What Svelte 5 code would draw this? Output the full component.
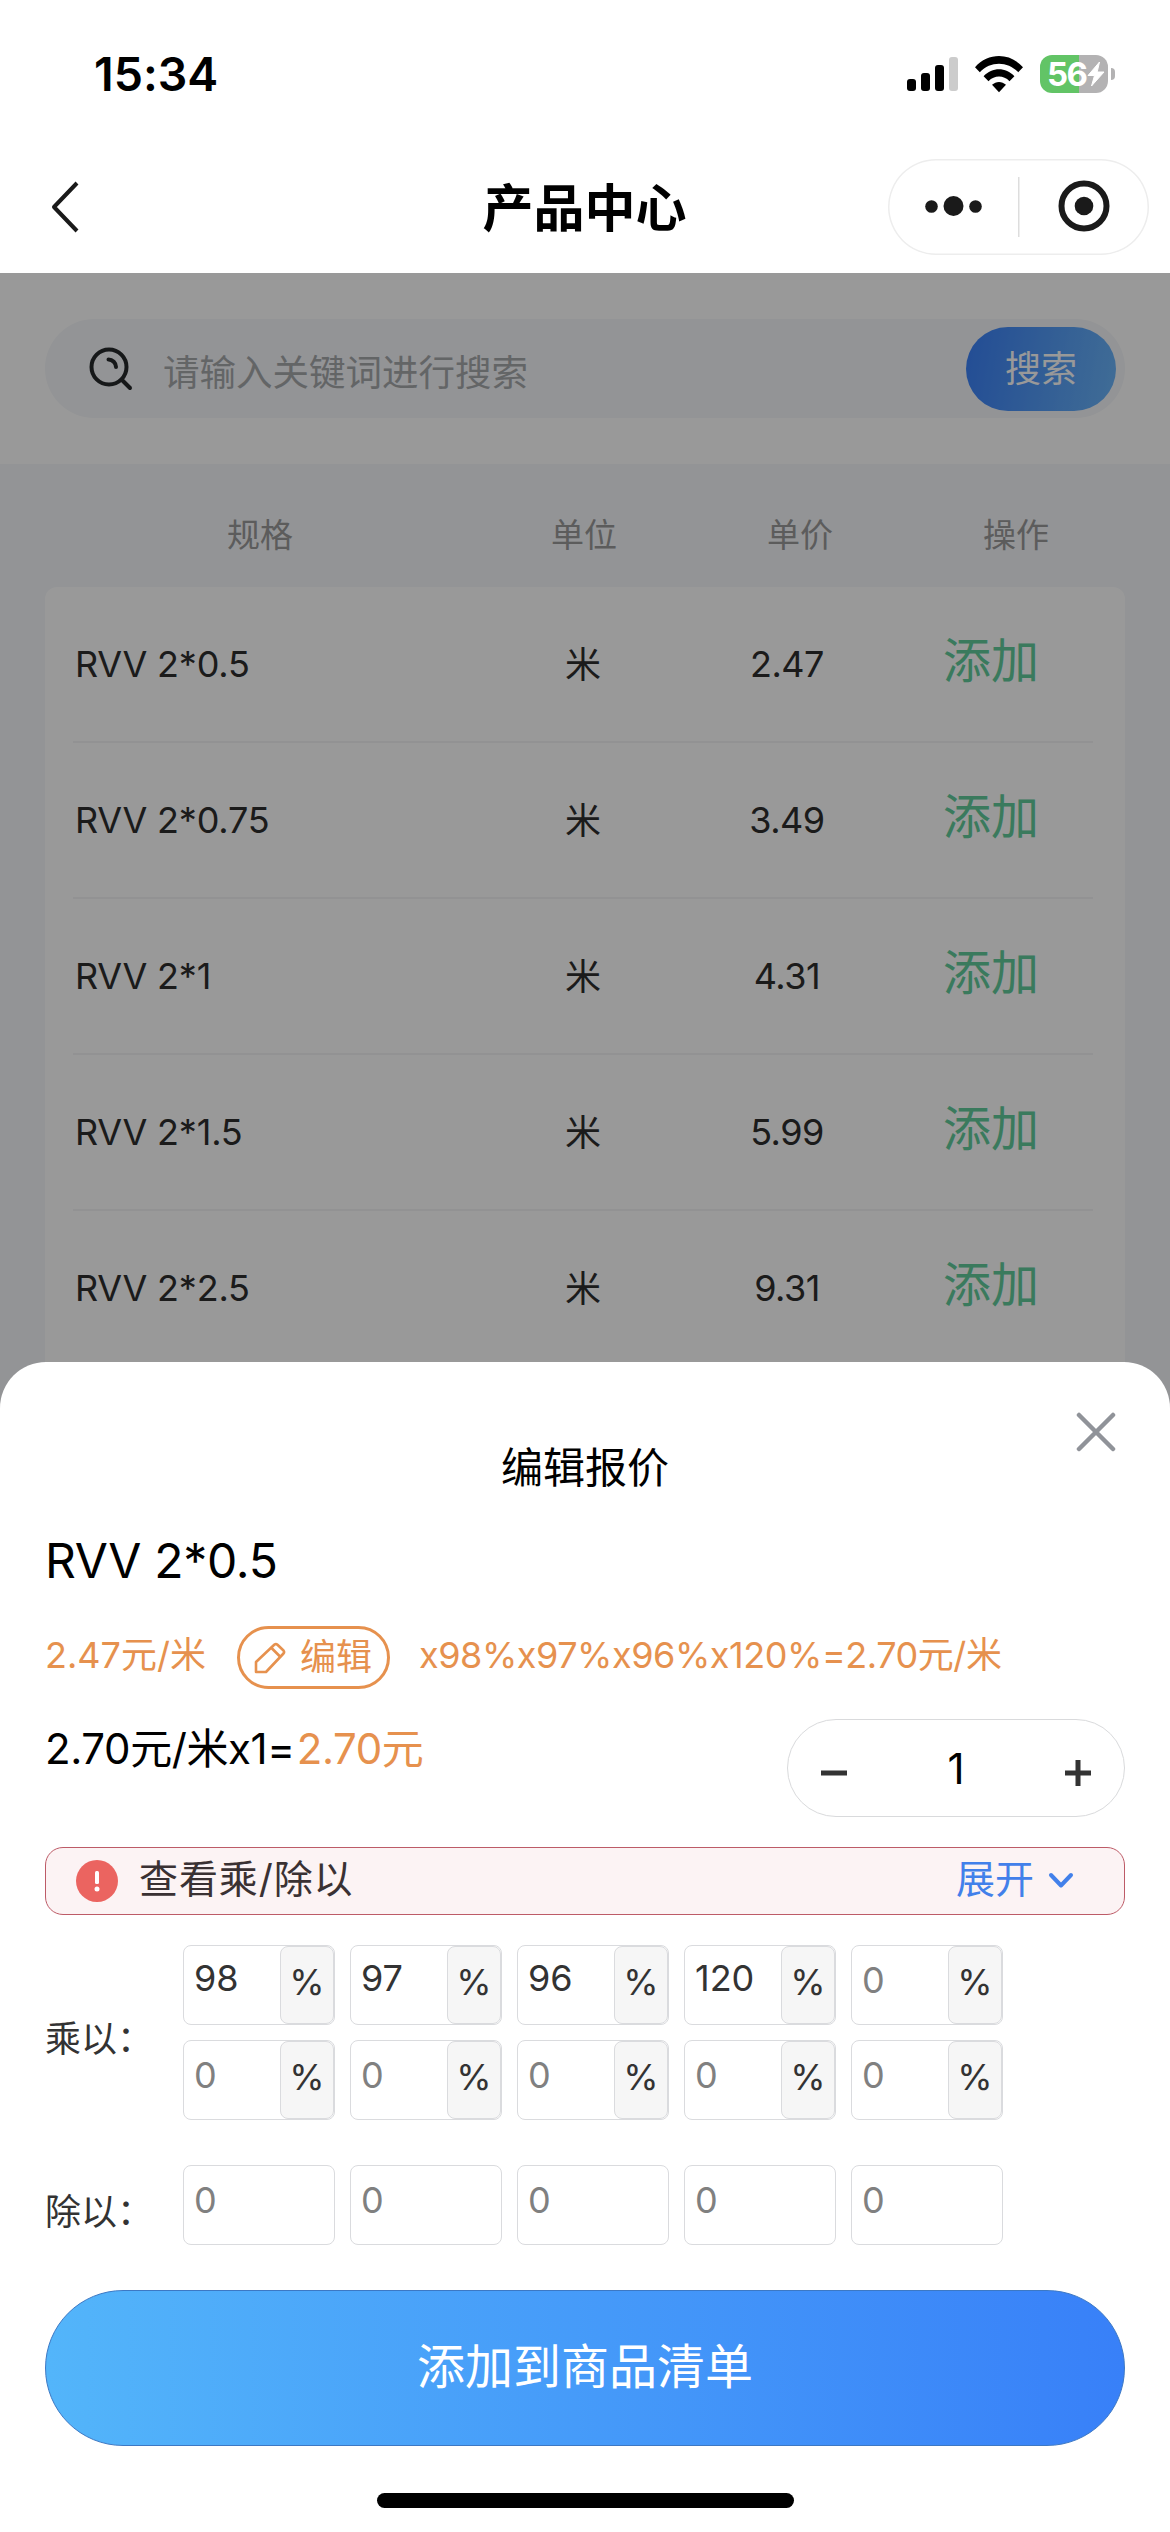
<script lang="ts">
    type Product = { spec: string; unit: string; price: string };

    const products: Product[] = [
        { spec: "RVV 2*0.5", unit: "米", price: "2.47" },
        { spec: "RVV 2*0.75", unit: "米", price: "3.49" },
        { spec: "RVV 2*1", unit: "米", price: "4.31" },
        { spec: "RVV 2*1.5", unit: "米", price: "5.99" },
        { spec: "RVV 2*2.5", unit: "米", price: "9.31" }
    ];

    const columns = ["规格", "单位", "单价", "操作"];

    // null means the field is empty and shows its placeholder
    const multiply = [98, 97, 96, 120, null, null, null, null, null, null];
    const divide = [null, null, null, null, null];

    let count = 1;
    let open = true;

    function minus() {
        if (count > 1) count -= 1;
    }

    function plus() {
        count += 1;
    }
</script>

<div class="page">
    <header class="top">
        <div class="status">
            <span class="time">15:34</span>
            <svg class="signal" width="52" height="36" viewBox="0 0 52 36">
                <rect x="0" y="23" width="9" height="12" rx="3" />
                <rect x="14" y="17" width="9" height="18" rx="3" />
                <rect x="28" y="9" width="9" height="26" rx="3" />
                <rect x="42" y="1" width="9" height="34" rx="3" fill="#ccc" />
            </svg>
            <svg class="wifi" width="48" height="37" viewBox="0 0 48 37">
                <path d="M0 11.2C13.2 -3.6 34.800 -3.600 48 11.200L43.200 16.200C32.500 4.900 15.500 4.900 4.800 16.200Z" />
                <path d="M8.600 20.200C17.300 10.900 30.700 10.900 39.400 20.200L34.500 25.200C28.500 19 19.500 19 13.500 25.200Z" />
                <path d="M17 28.800C21 24.900 27 24.900 31 28.800L24 36.300Z" />
            </svg>
            <div class="battery">
                <span>56</span>
                <svg width="18" height="26" viewBox="0 0 18 26">
                    <path d="M12.500 1L1 14.500H7.500L4.500 25L17 11H10.200Z" fill="#fff" stroke="#fff" stroke-width="1" stroke-linejoin="round" />
                </svg>
            </div>
            <div class="battery-cap"></div>
        </div>
        <div class="nav">
            <svg class="back" width="30" height="52" viewBox="0 0 30 52" fill="none" stroke="#1a1a1a" stroke-width="4">
                <path d="M27 2L4 26L27 50" stroke-linejoin="round" />
            </svg>
            <h1>产品中心</h1>
            <div class="capsule">
                <svg width="261" height="96" viewBox="0 0 261 96" fill="#1a1a1a">
                    <circle cx="43.500" cy="47.500" r="6.300" />
                    <circle cx="65.500" cy="47" r="10" />
                    <circle cx="87.500" cy="47.500" r="6.300" />
                    <rect x="130" y="18" width="1.500" height="60" fill="#ddd" />
                    <circle cx="196" cy="47" r="22.500" fill="none" stroke="#1a1a1a" stroke-width="6" />
                    <circle cx="196" cy="47" r="9.300" />
                </svg>
            </div>
        </div>
    </header>

    <main>
        <div class="search-area">
            <div class="search">
                <svg width="44" height="44" viewBox="0 0 44 44" fill="none" stroke="#26282b" stroke-width="4" stroke-linecap="round">
                    <circle cx="20" cy="20" r="17.500" />
                    <path d="M33 33L41 41" />
                    <path d="M19.500 12.500C23.500 12.500 27 16 27 20" />
                </svg>
                <span class="placeholder">请输入关键词进行搜索</span>
                <div class="search-btn">搜索</div>
            </div>
        </div>

        <div class="row head">
            {#each columns as column}
                <span>{column}</span>
            {/each}
        </div>

        <div class="card">
            {#each products as product}
                <div class="row">
                    <span class="spec">{product.spec}</span>
                    <span class="unit">{product.unit}</span>
                    <span class="price">{product.price}</span>
                    <span class="add">添加</span>
                </div>
            {/each}
        </div>
    </main>

    {#if open}
        <div class="mask"></div>
        <section class="sheet">
            <svg class="close" on:click={() => (open = false)} width="40" height="40" viewBox="0 0 40 40" stroke="#909399" stroke-width="4.500" stroke-linecap="round" role="presentation">
                <path d="M3 3L37 37M37 3L3 37" />
            </svg>
            <h2>编辑报价</h2>
            <div class="name">RVV 2*0.5</div>

            <div class="price-line">
                <span class="base">2.47元/米</span>
                <div class="edit">
                    <svg width="32" height="32" viewBox="0 0 32 32" fill="none" stroke="#e6914e" stroke-width="2.600" stroke-linejoin="round">
                        <path d="M2 30V20L20.500 2.500Q22 1.500 23.500 2.800L29.500 8.500Q30.700 10 29.500 11.500L12 30Z" />
                        <path d="M17.500 6L26 14.500" />
                    </svg>
                    <span>编辑</span>
                </div>
                <span class="formula">x98%x97%x96%x120%=2.70元/米</span>
            </div>

            <div class="total-line">
                <div class="total">2.70元/米x{count}=<em>2.70元</em></div>
                <div class="stepper">
                    <svg on:click={minus} role="presentation" width="28" height="28" viewBox="0 0 28 28" fill="#333">
                        <rect x="1" y="11.500" width="26" height="5" />
                    </svg>
                    <span>{count}</span>
                    <svg on:click={plus} role="presentation" width="28" height="28" viewBox="0 0 28 28" fill="#333">
                        <rect x="1" y="11.500" width="26" height="5" />
                        <rect x="11.500" y="1" width="5" height="26" />
                    </svg>
                </div>
            </div>

            <div class="notice">
                <svg width="42" height="42" viewBox="0 0 42 42">
                    <circle cx="21" cy="21" r="21" fill="#eb6460" />
                    <rect x="19" y="11" width="4" height="13" rx="1.500" fill="#fff" />
                    <circle cx="21" cy="29" r="2.500" fill="#fff" />
                </svg>
                <span class="notice-text">查看乘/除以</span>
                <span class="expand">展开</span>
                <svg width="26" height="18" viewBox="0 0 26 18" fill="none" stroke="#4280ea" stroke-width="4" stroke-linecap="round" stroke-linejoin="round">
                    <path d="M3 3L13 13.500L23 3" />
                </svg>
            </div>

            <div class="factor multiply">
                <span class="label">乘以：</span>
                <div class="fields">
                    {#each multiply as value}
                        <div class="field">
                            <span class:empty={value === null}>{value ?? 0}</span>
                            <div class="percent">%</div>
                        </div>
                    {/each}
                </div>
            </div>

            <div class="factor divide">
                <span class="label">除以：</span>
                <div class="fields">
                    {#each divide as value}
                        <div class="field">
                            <span class:empty={value === null}>{value ?? 0}</span>
                        </div>
                    {/each}
                </div>
            </div>

            <div class="submit">添加到商品清单</div>
            <div class="home-bar"></div>
        </section>
    {/if}
</div>

<style>
    .page {
        position: relative;
        width: 1170px;
        height: 2532px;
        overflow: hidden;
        background: #f5f7fa;
        color: #000;
        font-family: Inter, "Noto Sans CJK SC", sans-serif;
        font-feature-settings: "calt" 0;
        font-size: 36px;
    }

    .page :global(*) {
        box-sizing: border-box;
    }

    svg {
        display: block;
        flex: none;
    }

    .top {
        height: 273px;
        background: #fff;
    }

    .status {
        display: flex;
        align-items: center;
        height: 148px;
        padding: 0 55px 0 94px;
    }

    .time {
        flex: 1;
        font-size: 46.5px;
        font-weight: 600;
    }

    .wifi {
        margin: 0 17px 0 16px;
    }

    .battery {
        display: flex;
        align-items: center;
        width: 68px;
        height: 38px;
        padding-left: 7px;
        border-radius: 12px;
        background: linear-gradient(90deg, #62c466 57%, #b3b2b3 57%);
        color: #fff;
        font-size: 33px;
        font-weight: 700;
        line-height: 38px;
        letter-spacing: -1.5px;
    }

    .battery-cap {
        width: 4px;
        height: 12px;
        margin-left: 3px;
        border-radius: 0 5px 5px 0;
        background: #b3b2b3;
    }

    .nav {
        display: grid;
        grid-template-columns: 1fr auto 1fr;
        align-items: center;
        height: 118px;
        padding: 0 21px 0 50px;
    }

    .nav h1 {
        margin: 3px 0 0 -30px;
        font-size: 51px;
        font-weight: 600;
        line-height: 60px;
    }

    .capsule {
        justify-self: end;
        width: 261px;
        height: 96px;
        border-radius: 48px;
        box-shadow: inset 0 0 0 1.5px #ededed;
    }

    .search-area {
        height: 191px;
        padding: 46px 45px 0;
        background: #fff;
    }

    .search {
        display: flex;
        align-items: center;
        height: 99px;
        padding: 0 9px 0 44px;
        border-radius: 50px;
        background: #f5f7fa;
    }

    .placeholder {
        flex: 1;
        margin: 3px 0 0 30px;
        color: #a6a8ab;
        font-size: 36.5px;
    }

    .search-btn {
        width: 150px;
        height: 84px;
        border-radius: 42px;
        background: linear-gradient(100deg, #3a80f8, #6cb6fa);
        color: #fff;
        font-size: 36px;
        line-height: 84px;
        text-align: center;
    }

    .row {
        display: grid;
        grid-template-columns: 2fr 1fr 1fr 1fr;
        align-items: center;
        height: 156px;
        color: #2e2e2e;
        text-align: center;
    }

    .head {
        height: 123px;
        padding: 14px 46px 0 44px;
        color: #999;
        font-size: 33px;
    }

    .card {
        height: 1200px;
        margin: 0 45px;
        padding: 0 32px 0 28px;
        border-radius: 12px;
        background: #fff;
    }

    .card .row {
        border-bottom: 2px solid #f3f3f5;
    }

    .spec {
        padding-left: 2px;
        letter-spacing: -0.2px;
        text-align: left;
    }

    .unit {
        margin-top: -4px;
    }

    .price {
        letter-spacing: -0.5px;
    }

    .add {
        margin-top: -14px;
        color: #62cc9c;
        font-size: 48px;
    }

    .mask {
        position: absolute;
        inset: 273px 0 0;
        background: rgba(0, 0, 0, 0.4);
    }

    .sheet {
        position: absolute;
        inset: 1362px 0 0;
        padding: 0 45px;
        border-radius: 46px 46px 0 0;
        background: #fff;
    }

    .close {
        position: absolute;
        top: 50px;
        right: 54px;
    }

    .sheet h2 {
        margin: 0;
        padding-top: 76px;
        font-size: 42px;
        font-weight: 400;
        line-height: 60px;
        text-align: center;
    }

    .name {
        margin-top: 33px;
        font-size: 48px;
        line-height: 60px;
        letter-spacing: -0.3px;
    }

    .price-line {
        display: flex;
        align-items: center;
        height: 63px;
        margin-top: 35px;
        color: #e6914e;
        line-height: 60px;
    }

    .base,
    .formula {
        margin-top: -5px;
    }

    .base {
        width: 192px;
    }

    .edit {
        display: flex;
        align-items: center;
        width: 153px;
        height: 63px;
        padding-left: 14px;
        border: 3px solid #e6914e;
        border-radius: 32px;
    }

    .edit span {
        margin: -2px 0 0 14px;
        line-height: 54px;
    }

    .formula {
        margin-left: 29px;
        letter-spacing: -0.45px;
    }

    .total-line {
        display: flex;
        justify-content: space-between;
        margin-top: 30px;
    }

    .total {
        font-size: 42px;
        line-height: 60px;
        letter-spacing: -0.4px;
    }

    .total em {
        margin-left: 2px;
        color: #e6914e;
        font-style: normal;
    }

    .stepper {
        display: flex;
        justify-content: space-between;
        align-items: center;
        width: 338px;
        height: 98px;
        padding: 0 32px;
        border: 1px solid #d9dadc;
        border-radius: 49px;
    }

    .stepper svg {
        margin-top: 9px;
    }

    .stepper span {
        font-size: 42px;
    }

    .notice {
        display: flex;
        align-items: center;
        height: 68px;
        margin-top: 30px;
        padding: 0 50px 0 30px;
        border: 1px solid #bd5b67;
        border-radius: 18px;
        background: #fcf3f4;
        color: #3a3133;
        font-size: 39px;
        line-height: 62px;
    }

    .notice-text {
        flex: 1;
        margin: -4px 0 0 21px;
        letter-spacing: 0.9px;
    }

    .expand {
        margin: -4px 14px 0 0;
        color: #4280ea;
    }

    .factor {
        display: flex;
        align-items: center;
        color: #333;
    }

    .label {
        width: 138px;
        white-space: nowrap;
    }

    .fields {
        display: grid;
        grid-template-columns: repeat(5, 152px);
        gap: 15px;
    }

    .multiply {
        margin-top: 30px;
    }

    .divide {
        margin-top: 45px;
    }

    .multiply .label {
        padding-top: 7px;
    }

    .divide .label {
        padding-top: 8px;
    }

    .field {
        display: flex;
        justify-content: space-between;
        height: 80px;
        padding-left: 10px;
        border: 1px solid #dadbde;
        border-radius: 8px;
    }

    .field span {
        line-height: 64px;
    }

    .field .empty {
        color: #808080;
        line-height: 69px;
    }

    .percent {
        width: 54px;
        border: 1px solid #dadbde;
        border-radius: 8px;
        background: #f6f6f6;
        line-height: 71px;
        text-align: center;
    }

    .submit {
        height: 156px;
        margin-top: 45px;
        border: 1px solid #3c78c4;
        border-radius: 78px;
        background: linear-gradient(90deg, #53b5fa, #3880f8);
        color: #fff;
        font-size: 48px;
        line-height: 152px;
        text-align: center;
    }

    .home-bar {
        width: 417px;
        height: 15px;
        margin: 47px auto 0;
        border-radius: 8px;
        background: #000;
    }
</style>
